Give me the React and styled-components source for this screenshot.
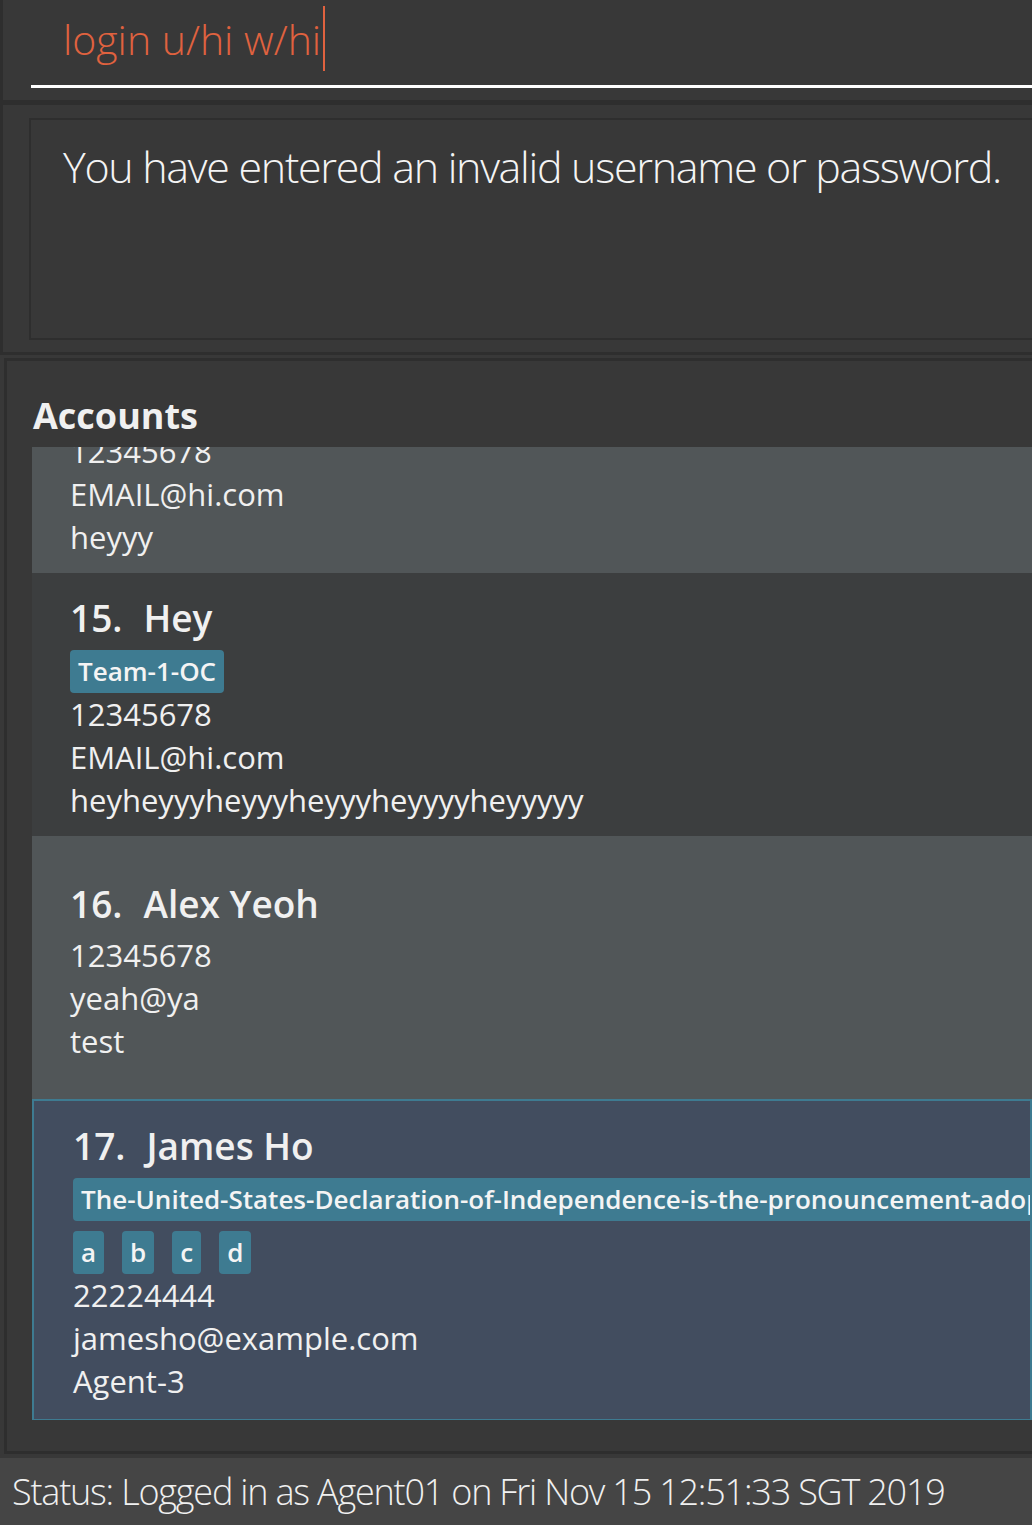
import React from 'react'
import styled, { createGlobalStyle } from 'styled-components'

const GlobalStyle = createGlobalStyle`
  html, body {
    margin: 0;
    padding: 0;
    background: #383838;
  }
  * {
    box-sizing: border-box;
  }
`

const Window = styled.div`
  width: 1032px;
  height: 1525px;
  overflow: hidden;
  display: flex;
  flex-direction: column;
  background: #383838;
  font-family: 'Open Sans', 'Noto Sans', sans-serif;
  color: #f0f0f0;
`

const CommandPane = styled.div`
  height: 105px;
  flex-shrink: 0;
  border-left: 3px solid #2e2e2e;
  border-bottom: 5px solid #2e2e2e;
  padding: 0 0 0 28px;
  display: flex;
  align-items: flex-start;
`

const CommandField = styled.div`
  width: 100%;
  height: 88px;
  border-bottom: 3px solid #ffffff;
  padding: 6px 0 0 32px;
  display: flex;
  align-items: flex-start;
  font-weight: 300;
  font-size: 41px;
  line-height: 66px;
  color: #e0623f;
  white-space: nowrap;
`

const Caret = styled.span`
  display: inline-block;
  width: 2px;
  height: 65px;
  margin-left: 2px;
  background: #e0623f;
`

const ResultPane = styled.div`
  height: 250px;
  flex-shrink: 0;
  border-left: 3px solid #2e2e2e;
  border-bottom: 3px solid #2e2e2e;
  padding: 13px 0 12px 26px;
  display: flex;
`

const ResultBox = styled.div`
  flex: 1;
  border: 2px solid #2e2e2e;
  border-right: none;
  padding: 17px 0 0 32px;
  font-weight: 300;
  font-size: 43px;
  letter-spacing: -1.3px;
  color: #f4f4f4;
  white-space: nowrap;
  overflow: hidden;
`

const AccountsPane = styled.div`
  height: 1096px;
  flex-shrink: 0;
  margin: 3px 0 0 4px;
  border: 3px solid #2e2e2e;
  border-right: none;
  padding: 28px 0 0 25px;
  display: flex;
  flex-direction: column;
`

const PaneTitle = styled.div`
  font-weight: 700;
  font-size: 36px;
  line-height: 54px;
  height: 58px;
  color: #f0f0f0;
  margin-left: 1px;
`

const ListViewport = styled.div`
  height: 973px;
  overflow: hidden;
`

const ListTrack = styled.div`
  margin-top: -137px;
  display: flex;
  flex-direction: column;
`

const Cell = styled.div`
  min-height: 263px;
  padding: 20px 0 ${p => (p.$selected ? '16px' : '14px')} ${p => (p.$selected ? '39px' : '38px')};
  display: flex;
  flex-direction: column;
  justify-content: center;
  overflow: hidden;
  white-space: nowrap;
  background: ${p => (p.$selected ? '#424d5f' : p.$odd ? '#515658' : '#3c3e3f')};
  border: ${p => (p.$selected ? '2px solid #3e7b91' : 'none')};
`

const NameRow = styled.div`
  display: flex;
  gap: 21px;
  font-weight: 600;
  font-size: 37px;
  line-height: 50px;
  height: 50px;
  margin-bottom: 5px;
  color: #f0f0f0;
`

const Tags = styled.div`
  display: flex;
  flex-wrap: wrap;
  gap: 10px 18px;
  margin: 2px 0 0;
`

const Tag = styled.span`
  height: 43px;
  padding: 0 8px;
  border-radius: 4px;
  background: #3e7b91;
  color: #f4f4f4;
  font-weight: 600;
  font-size: 26px;
  line-height: 43px;
`

const Detail = styled.div`
  font-size: 31px;
  line-height: 43px;
  height: 43px;
  color: #f0f0f0;
`

const StatusBar = styled.div`
  margin-top: 4px;
  flex: 1;
  background: #454545;
  padding: 0 0 0 12px;
  display: flex;
  align-items: center;
  font-weight: 300;
  font-size: 36px;
  letter-spacing: -1.2px;
  color: #f0f0f0;
  white-space: nowrap;
`

const accounts = [
  { index: 14, name: 'Hey', tags: ['Team-1-OC'], phone: '12345678', email: 'EMAIL@hi.com', remark: 'heyyy' },
  { index: 15, name: 'Hey', tags: ['Team-1-OC'], phone: '12345678', email: 'EMAIL@hi.com', remark: 'heyheyyyheyyyheyyyheyyyyheyyyyy' },
  { index: 16, name: 'Alex Yeoh', tags: [], phone: '12345678', email: 'yeah@ya', remark: 'test' },
  {
    index: 17,
    name: 'James Ho',
    tags: ['The-United-States-Declaration-of-Independence-is-the-pronouncement-adopted-by-the-Second-Continental-Congress', 'a', 'b', 'c', 'd'],
    phone: '22224444',
    email: 'jamesho@example.com',
    remark: 'Agent-3',
    selected: true,
  },
]

const AccountCard = ({ account, odd }) => (
  <Cell $odd={odd} $selected={account.selected}>
    <NameRow>
      <span>{account.index}.</span>
      <span>{account.name}</span>
    </NameRow>
    {account.tags.length > 0 && (
      <Tags>
        {account.tags.map(t => <Tag key={t}>{t}</Tag>)}
      </Tags>
    )}
    <Detail>{account.phone}</Detail>
    <Detail>{account.email}</Detail>
    <Detail>{account.remark}</Detail>
  </Cell>
)

export default function App() {
  return (
    <Window>
      <GlobalStyle />

      {/* COMMAND BOX */}
      <CommandPane>
        <CommandField>
          login u/hi w/hi
          <Caret />
        </CommandField>
      </CommandPane>

      {/* RESULT DISPLAY */}
      <ResultPane>
        <ResultBox>You have entered an invalid username or password.</ResultBox>
      </ResultPane>

      {/* ACCOUNT LIST */}
      <AccountsPane>
        <PaneTitle>Accounts</PaneTitle>
        <ListViewport>
          <ListTrack>
            {accounts.map((a, i) => (
              <AccountCard key={a.index} account={a} odd={i % 2 === 0} />
            ))}
          </ListTrack>
        </ListViewport>
      </AccountsPane>

      {/* STATUS BAR */}
      <StatusBar>Status: Logged in as Agent01 on Fri Nov 15 12:51:33 SGT 2019</StatusBar>
    </Window>
  )
}
